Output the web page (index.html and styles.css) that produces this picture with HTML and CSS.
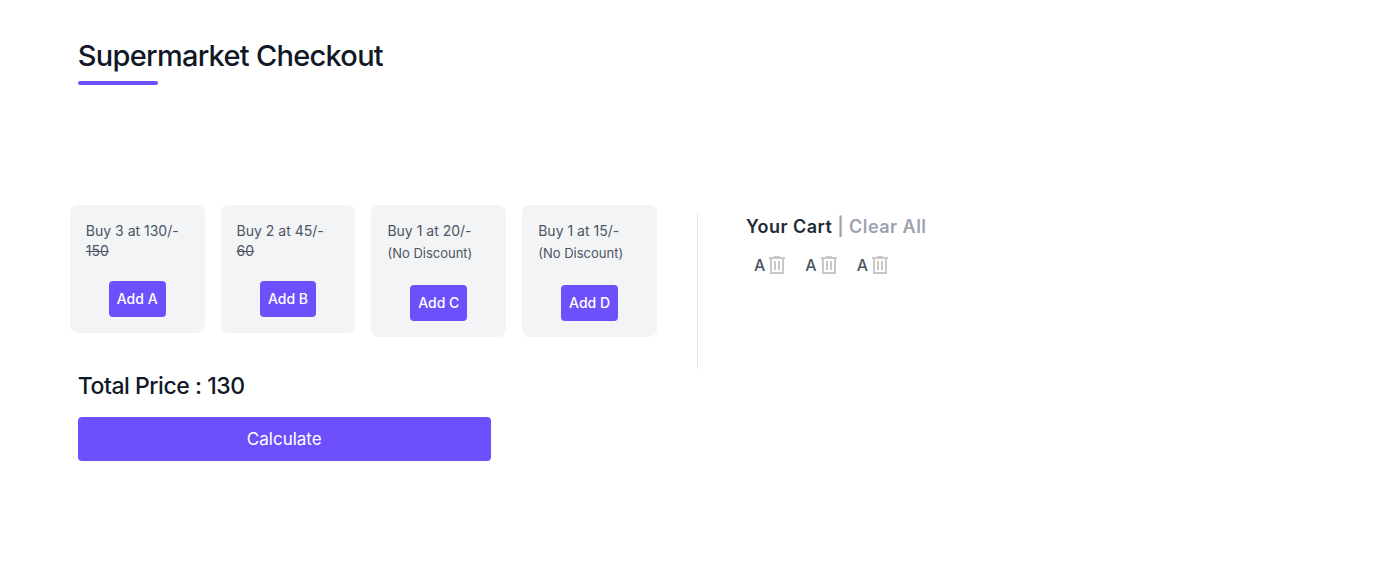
FILE: index.html
```html
<!DOCTYPE html>
<html lang="en">
<head>
<meta charset="utf-8">
<meta name="viewport" content="width=device-width, initial-scale=1">
<title>Supermarket Checkout</title>
<link rel="stylesheet" href="styles.css">
</head>
<body>
<svg class="sprite" aria-hidden="true">
  <symbol id="trash" viewBox="0 0 16 18">
    <path fill="currentColor" fill-rule="evenodd" d="M5 0h6v1h5v2h-1v15H1V3H0V1h5zM3 3v13h10V3zM5 5h2v9H5zM9 5h2v9H9z"/>
  </symbol>
</svg>
<header class="header">
  <h1 class="title">Supermarket Checkout</h1>
  <div class="title-rule"></div>
</header>
<main class="checkout">
  <section class="shop">
    <div class="offers">
      <article class="offer">
        <p class="offer-text">Buy 3 at 130/-</p>
        <p class="offer-text"><s>150</s></p>
        <button class="add" type="button">Add A</button>
      </article>
      <article class="offer">
        <p class="offer-text">Buy 2 at 45/-</p>
        <p class="offer-text"><s>60</s></p>
        <button class="add" type="button">Add B</button>
      </article>
      <article class="offer">
        <p class="offer-text">Buy 1 at 20/-</p>
        <p class="offer-note">(No Discount)</p>
        <button class="add" type="button">Add C</button>
      </article>
      <article class="offer">
        <p class="offer-text">Buy 1 at 15/-</p>
        <p class="offer-note">(No Discount)</p>
        <button class="add" type="button">Add D</button>
      </article>
    </div>
    <div class="total">
      <h2 class="total-price">Total Price : 130</h2>
      <button class="calculate" type="button">Calculate</button>
    </div>
  </section>
  <section class="cart">
    <h2 class="cart-title">Your Cart <button class="clear" type="button">| Clear All</button></h2>
    <ul class="cart-items">
      <li class="cart-item">A<button class="remove" type="button" aria-label="Remove A"><svg class="trash"><use href="#trash"/></svg></button></li>
      <li class="cart-item">A<button class="remove" type="button" aria-label="Remove A"><svg class="trash"><use href="#trash"/></svg></button></li>
      <li class="cart-item">A<button class="remove" type="button" aria-label="Remove A"><svg class="trash"><use href="#trash"/></svg></button></li>
    </ul>
  </section>
</main>
</body>
</html>
```
FILE: styles.css
```css
* {
  box-sizing: border-box;
}

body {
  margin: 0;
  background: #fff;
  color: #111827;
  font-family: Inter, "Liberation Sans", sans-serif;
}

h1, h2, p, ul {
  margin: 0;
  padding: 0;
}

button {
  border: 0;
  padding: 0;
  background: none;
  color: inherit;
  font: inherit;
  letter-spacing: inherit;
  cursor: pointer;
}

.sprite {
  display: none;
}

.header {
  padding: 38px 5% 0;
  margin-left: 8px;
}

.title {
  font-size: 29px;
  font-weight: 500;
  line-height: 36px;
  letter-spacing: -0.025em;
}

.title-rule {
  width: 80px;
  height: 4px;
  margin-top: 7px;
  border-radius: 2px;
  background: #6d50fb;
}

.checkout {
  display: grid;
  grid-template-columns: 1fr 1fr;
  align-items: start;
  margin-top: 120px;
}

.shop {
  padding-left: 10%;
  padding-right: 41px;
}

.offers {
  display: grid;
  grid-template-columns: repeat(4, 1fr);
  gap: 16px;
  align-items: start;
}

.offer {
  display: flex;
  flex-direction: column;
  padding: 16px;
  border-radius: 8px;
  background: #f3f4f6;
  color: #4b5563;
}

.offer-text {
  font-size: 14px;
  line-height: 20px;
  white-space: nowrap;
}

.offer-note {
  font-size: 13px;
  line-height: 24px;
  white-space: nowrap;
}

.add {
  align-self: center;
  margin-top: 20px;
  padding: 8px;
  border-radius: 4px;
  background: #6d50fb;
  color: #fff;
  font-size: 14px;
  font-weight: 500;
  line-height: 20px;
}

.total {
  padding: 33px 0 0 8px;
}

.total-price {
  font-size: 23px;
  font-weight: 500;
  line-height: 32px;
  letter-spacing: -0.02em;
}

.calculate {
  width: 71.3%;
  margin-top: 15px;
  padding: 8px;
  border-radius: 4px;
  background: #6d50fb;
  color: #fff;
  font-size: 17px;
  line-height: 28px;
}

.cart {
  min-height: 156px;
  margin-top: 8px;
  margin-left: -1px;
  padding-left: 48px;
  border-left: 1px solid #e5e7eb;
}

.cart-title {
  color: #1f2937;
  font-size: 18px;
  font-weight: 600;
  line-height: 28px;
  letter-spacing: 0.025em;
}

.clear {
  color: #9ca3af;
}

.cart-items {
  display: flex;
  gap: 20px;
  margin-top: 12px;
  padding-left: 8px;
  list-style: none;
}

.cart-item {
  display: flex;
  align-items: center;
  gap: 4px;
  color: #4b5563;
  font-size: 16px;
  font-weight: 500;
  line-height: 24px;
}

.trash {
  display: block;
  width: 16px;
  height: 18px;
  color: #c8c8c8;
}
```
